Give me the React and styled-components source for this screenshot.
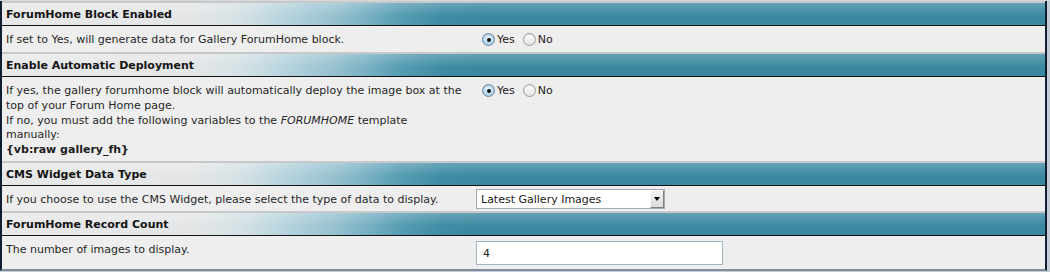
import React from "react";
import styled, { createGlobalStyle } from "styled-components";

const Global = createGlobalStyle`
  html, body { margin: 0; padding: 0; }
  body {
    background: #c3ccd4;
    font-family: Verdana, "DejaVu Sans", sans-serif;
    font-size: 11px;
    color: #2a2a2a;
    width: 1050px;
    height: 272px;
    overflow: hidden;
  }
`;

const Page = styled.div`
  padding-top: 1px;
  background: linear-gradient(#d6d8da 0 1px, transparent 1px);
`;

const Sheet = styled.div`
  width: 1043px;
  border-left: 2px solid #0f1f31;
  border-right: 2px solid #0f1f31;
  border-bottom: 2px solid #7f8e9a;
  background: #eeeeee;
`;

const Header = styled.div`
  height: 22px;
  border-top: 2px solid #c6c8ca;
  border-bottom: 1px solid #121212;
  display: flex;
  align-items: center;
  padding-left: 4px;
  font-weight: bold;
  color: #141414;
  background:
    linear-gradient(rgba(255,255,255,0.22), rgba(255,255,255,0) 60%),
    linear-gradient(
      to right,
      #e8e8e8 0px,
      #e4e6e7 190px,
      #d4e1e5 240px,
      #bcd6df 275px,
      #98c2d0 330px,
      #7ab2c4 362px,
      #559cb2 400px,
      #3f8ca5 440px,
      #3a88a0 480px,
      #3a88a0 100%
    );
`;

const Row = styled.div`
  display: grid;
  grid-template-columns: 470px 1fr;
  background: #eeeeee;
  min-height: ${(p) => p.$min || 25}px;
`;

const Desc = styled.div`
  padding: 7px 4px 3px;
  line-height: 14.8px;
  color: #262626;
`;

const Control = styled.div`
  display: flex;
  align-items: ${(p) => (p.$top ? "flex-start" : "center")};
  padding: ${(p) => (p.$top ? "7px 4px 0" : "1px 4px 0")};
`;

const Code = styled.b`
  color: #1c1c1c;
`;

const RadioGroup = styled.div`
  display: flex;
  align-items: center;
  gap: 8px;
  margin-left: 6px;
`;

const RadioLabel = styled.label`
  display: flex;
  align-items: center;
  gap: 2px;
  color: #222;
`;

const RadioDot = styled.span`
  position: relative;
  width: 13px;
  height: 13px;
  box-sizing: border-box;
  border-radius: 50%;
  border: 1px solid ${(p) => (p.$on ? "#6a86a0" : "#9c9c9c")};
  background: ${(p) =>
    p.$on
      ? "radial-gradient(circle at 50% 40%, #f2f9ff 0%, #bcdcf3 55%, #8ab8dc 100%)"
      : "linear-gradient(#ffffff, #e2e2e2)"};
  box-shadow: inset 0 1px 1px rgba(0,0,0,0.12);
  &::after {
    content: "";
    display: ${(p) => (p.$on ? "block" : "none")};
    position: absolute;
    left: 50%;
    top: 50%;
    width: 4px;
    height: 4px;
    margin: -2px 0 0 -2px;
    border-radius: 50%;
    background: #111;
  }
`;

const SelectBox = styled.div`
  position: relative;
  width: 189px;
  height: 20px;
  box-sizing: border-box;
  border: 1px solid #a4abb1;
  background: #fff;
  display: flex;
  align-items: center;
  padding-left: 4px;
  color: #222;
`;

const SelectArrow = styled.span`
  position: absolute;
  right: 0;
  top: 0;
  bottom: 0;
  width: 14px;
  box-sizing: border-box;
  background: linear-gradient(#f4f4f4, #dcdcdc);
  border-left: 1px solid #f8f8f8;
  border-top: 1px solid #f8f8f8;
  border-right: 1px solid #7d7d7d;
  border-bottom: 1px solid #7d7d7d;
  display: flex;
  align-items: center;
  justify-content: center;
  &::before {
    content: "";
    border-left: 3px solid transparent;
    border-right: 3px solid transparent;
    border-top: 4px solid #000;
  }
`;

const TextInput = styled.div`
  width: 247px;
  height: 24px;
  box-sizing: border-box;
  border: 1px solid #a3b5c1;
  background: #fff;
  display: flex;
  align-items: center;
  padding-left: 6px;
  color: #222;
`;

function Radios() {
  return (
    <RadioGroup>
      <RadioLabel>
        <RadioDot $on />
        Yes
      </RadioLabel>
      <RadioLabel>
        <RadioDot />
        No
      </RadioLabel>
    </RadioGroup>
  );
}

export default function App() {
  return (
    <>
      <Global />
      <Page>
        <Sheet>
          <Header>ForumHome Block Enabled</Header>
          <Row $min={26}>
            <Desc>If set to Yes, will generate data for Gallery ForumHome block.</Desc>
            <Control>
              <Radios />
            </Control>
          </Row>

          <Header>Enable Automatic Deployment</Header>
          <Row $min={84}>
            <Desc>
              If yes, the gallery forumhome block will automatically deploy the image box at the
              <br />
              top of your Forum Home page.
              <br />
              If no, you must add the following variables to the <i>FORUMHOME</i> template
              <br />
              manually:
              <br />
              <Code>{"{vb:raw gallery_fh}"}</Code>
            </Desc>
            <Control $top>
              <Radios />
            </Control>
          </Row>

          <Header>CMS Widget Data Type</Header>
          <Row>
            <Desc>If you choose to use the CMS Widget, please select the type of data to display.</Desc>
            <Control>
              <SelectBox>
                Latest Gallery Images
                <SelectArrow />
              </SelectBox>
            </Control>
          </Row>

          <Header>ForumHome Record Count</Header>
          <Row $min={33}>
            <Desc>The number of images to display.</Desc>
            <Control>
              <TextInput>4</TextInput>
            </Control>
          </Row>
        </Sheet>
      </Page>
    </>
  );
}
